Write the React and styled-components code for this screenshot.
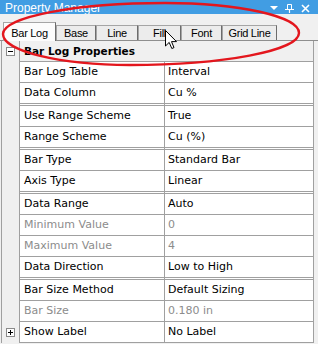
import React from "react";
import styled, { createGlobalStyle } from "styled-components";

const GlobalStyle = createGlobalStyle`
  html, body {
    margin: 0;
    padding: 0;
    background: #f0f0f0;
    overflow: hidden;
  }
`;

const tabs = [
  { label: "Bar Log", width: 53, active: true },
  { label: "Base", width: 40 },
  { label: "Line", width: 42 },
  { label: "Fill", width: 43 },
  { label: "Font", width: 41 },
  { label: "Grid Line", width: 55 },
];

const rows = [
  { name: "Bar Log Table", value: "Interval" },
  { name: "Data Column", value: "Cu %", sep: true },
  { name: "Use Range Scheme", value: "True" },
  { name: "Range Scheme", value: "Cu (%)", sep: true },
  { name: "Bar Type", value: "Standard Bar" },
  { name: "Axis Type", value: "Linear", sep: true },
  { name: "Data Range", value: "Auto" },
  { name: "Minimum Value", value: "0", disabled: true },
  { name: "Maximum Value", value: "4", disabled: true },
  { name: "Data Direction", value: "Low to High", sep: true },
  { name: "Bar Size Method", value: "Default Sizing" },
  { name: "Bar Size", value: "0.180 in", disabled: true },
  { name: "Show Label", value: "No Label", expand: "plus" },
];

const Window = styled.div`
  position: relative;
  width: 318px;
  height: 344px;
  overflow: hidden;
  background: #f0f0f0;
`;

const TitleBar = styled.div`
  height: 14px;
  box-sizing: border-box;
  padding: 0 8px 0 5px;
  background: #419de3;
  color: #fff;
  display: flex;
  justify-content: space-between;
  align-items: flex-start;
  overflow: hidden;
`;

const Title = styled.span`
  font-family: "Liberation Sans", Arial, sans-serif;
  font-size: 12px;
  line-height: 14px;
  padding-top: 1px;
  white-space: nowrap;
`;

const Controls = styled.div`
  display: flex;
  align-items: center;
  gap: 7px;
  height: 14px;
  padding-top: 2px;
  box-sizing: border-box;
`;

const TabStrip = styled.div`
  height: 27px;
  box-sizing: border-box;
  padding-left: 3px;
  display: flex;
  align-items: flex-end;
  border-bottom: 1px solid #8e8e8e;
`;

const Tab = styled.div`
  width: ${(p) => p.$w}px;
  height: ${(p) => (p.$active ? 19 : 15)}px;
  margin-bottom: ${(p) => (p.$active ? -1 : 0)}px;
  box-sizing: border-box;
  border: 1px solid #a5a5a5;
  border-right-color: #6c6c6c;
  border-bottom: none;
  background: ${(p) => (p.$active ? "#fcfcfc" : "#ececec")};
  display: flex;
  align-items: center;
  justify-content: center;
  padding-top: ${(p) => (p.$active ? 2 : 0)}px;
  font-family: "Liberation Sans", Arial, sans-serif;
  font-size: 11px;
  letter-spacing: -0.3px;
  color: #000;
  white-space: nowrap;
`;

const Body = styled.div`
  padding: 0 4px 0 1px;
`;

const Grid = styled.div`
  border-left: 1px solid #a0a0a0;
  border-right: 1px solid #a0a0a0;
  font-family: "DejaVu Sans", Tahoma, sans-serif;
  font-size: 11px;
`;

const Row = styled.div`
  display: grid;
  grid-template-columns: 18px 145px 1fr;
`;

const Gutter = styled.div`
  background: #f0f0f0;
  border-right: 1px solid #a0a0a0;
  display: flex;
  align-items: center;
  justify-content: center;
`;

const Cell = styled.div`
  height: 20px;
  line-height: 20px;
  padding-left: ${(p) => (p.$value ? 3 : 4)}px;
  border-bottom: ${(p) => (p.$sep ? "3px double #a0a0a0" : "1px solid #a0a0a0")};
  border-right: ${(p) => (p.$value ? "none" : "1px solid #a0a0a0")};
  background: #fff;
  color: ${(p) => (p.$disabled ? "#8c8c8c" : "#000")};
  white-space: nowrap;
  overflow: hidden;
`;

const HeaderCell = styled.div`
  grid-column: span 2;
  height: 20px;
  line-height: 20px;
  padding-left: 4px;
  border-bottom: 1px solid #a0a0a0;
  background: #f0f0f0;
  font-weight: bold;
  font-size: 10.5px;
  color: #000;
`;

const Overlay = styled.svg`
  position: absolute;
  left: 0;
  top: 0;
  pointer-events: none;
`;

const Cursor = styled.svg`
  position: absolute;
  left: 165px;
  top: 30px;
  pointer-events: none;
`;

const ExpandBox = ({ kind }) => (
  <svg width="9" height="9" viewBox="0 0 9 9">
    <rect x="0.5" y="0.5" width="8" height="8" fill="#fff" stroke="#8a8a8a" />
    <line x1="2" y1="4.5" x2="7" y2="4.5" stroke="#000" />
    {kind === "plus" && <line x1="4.5" y1="2" x2="4.5" y2="7" stroke="#000" />}
  </svg>
);

const TitleIcons = () => (
  <Controls>
    <svg width="8" height="6" viewBox="0 0 8 6">
      <path d="M0 1 H8 L4 5 Z" fill="#fff" />
    </svg>
    <svg width="9" height="9" viewBox="0 0 9 9">
      <path d="M2.5 0.5 H6.5 V5.5 H2.5 Z" fill="none" stroke="#fff" />
      <path d="M0 5.5 H9" stroke="#fff" />
      <path d="M4.5 5.5 V9" stroke="#fff" strokeWidth="1.2" />
    </svg>
    <svg width="9" height="9" viewBox="0 0 9 9">
      <path d="M1 1 L8 8 M8 1 L1 8" stroke="#fff" strokeWidth="1.6" />
    </svg>
  </Controls>
);

export default function App() {
  return (
    <Window>
      <GlobalStyle />
      <TitleBar>
        <Title>Property Manager</Title>
        <TitleIcons />
      </TitleBar>
      <TabStrip>
        {tabs.map((t) => (
          <Tab key={t.label} $w={t.width} $active={t.active}>
            {t.label}
          </Tab>
        ))}
      </TabStrip>
      <Body>
        <Grid>
          <Row>
            <Gutter>
              <ExpandBox kind="minus" />
            </Gutter>
            <HeaderCell>Bar Log Properties</HeaderCell>
          </Row>
          {rows.map((r) => (
            <Row key={r.name}>
              <Gutter>{r.expand && <ExpandBox kind={r.expand} />}</Gutter>
              <Cell $sep={r.sep} $disabled={r.disabled}>
                {r.name}
              </Cell>
              <Cell $value $sep={r.sep} $disabled={r.disabled}>
                {r.value}
              </Cell>
            </Row>
          ))}
        </Grid>
      </Body>
      <Overlay width="318" height="344" viewBox="0 0 318 344">
        <path
          d="M3 34 C3 16.9 75.6 3 165 3 C239 3 299 16.4 299 33 C299 50.7 223.3 65 130 65 C59.9 65 3 51.1 3 34 Z"
          fill="none"
          stroke="#e3161d"
          strokeWidth="2.4"
        />
      </Overlay>
      <Cursor width="13" height="20" viewBox="0 0 13 20">
        <path
          d="M0.5 0.5 V16 L4.2 12.4 L6.8 18.5 L9 17.6 L6.5 11.6 H11.5 Z"
          fill="#fff"
          stroke="#000"
          strokeLinejoin="miter"
        />
      </Cursor>
    </Window>
  );
}
